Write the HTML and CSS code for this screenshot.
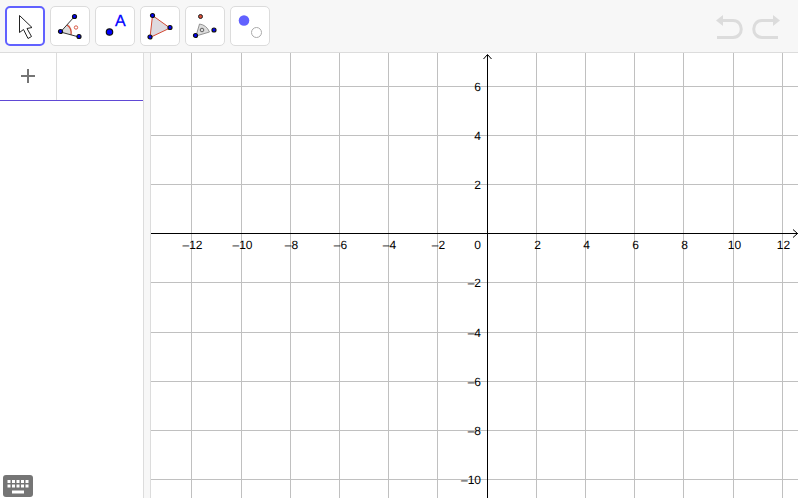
FILE: index.html
```html
<!DOCTYPE html>
<html lang="en">
<head>
    <meta charset="UTF-8">
    <title>Graphing</title>
    <meta name="viewport" content="width=device-width, initial-scale=1">
    <link rel="stylesheet" href="styles.css">
</head>
<body>
<div class="app">
    <header class="toolbar">
        <div class="tools">
            <button class="tool selected" aria-label="Move">
                <svg viewBox="0 0 36 36"><path d="M12.500 7.500v17l4-3 4.500 9 3.500-2-4.500-8 5-1z" fill="#fff" stroke="#222" stroke-width="1"/></svg>
            </button>
            <button class="tool" aria-label="Angle">
                <svg viewBox="0 0 36 36">
                    <path d="M8.500 24l8-8q4 4 3 10.500z" fill="#ddd"/>
                    <path d="M15 17q5 3 4 10" fill="none" stroke="#d54b35" stroke-width="1.2"/>
                    <path d="M22.500 8.500L8.500 24l18.500 5" fill="none" stroke="#333" stroke-width="1"/>
                    <circle cx="24" cy="19.500" r="1.700" fill="none" stroke="#d54b35" stroke-width=".9"/>
                    <g class="point"><circle cx="22.500" cy="8.500" r="2"/><circle cx="8.500" cy="23.500" r="2"/><circle cx="27" cy="28.500" r="2"/></g>
                </svg>
            </button>
            <button class="tool" aria-label="Point">
                <svg viewBox="0 0 36 36">
                    <circle class="point" cx="12.500" cy="24" r="3.200"/>
                    <text class="point-name" x="18" y="18">A</text>
                </svg>
            </button>
            <button class="tool" aria-label="Polygon">
                <svg viewBox="0 0 36 36">
                    <path d="M10.500 7.500L8 29.500l20-9.500z" fill="#dedadf" stroke="#d54b35" stroke-width="1"/>
                    <g class="point"><circle cx="10.500" cy="7.500" r="2"/><circle cx="8" cy="29" r="2"/><circle cx="28" cy="19.500" r="2"/></g>
                </svg>
            </button>
            <button class="tool" aria-label="Rotate">
                <svg viewBox="0 0 36 36">
                    <path d="M12.500 16q7 1 10 8L9 28z" fill="#ddd"/>
                    <path d="M9 28l3.500-12q7 1 10 8z" fill="none" stroke="#888" stroke-width=".9"/>
                    <circle cx="15" cy="22" r="1.800" fill="none" stroke="#555" stroke-width=".9"/>
                    <circle cx="13.500" cy="8.500" r="2" fill="#d54b35" stroke="#222" stroke-width="1"/>
                    <g class="point"><circle cx="8.500" cy="27.500" r="2"/><circle cx="27" cy="22" r="2"/></g>
                </svg>
            </button>
            <button class="tool" aria-label="Show / Hide">
                <svg viewBox="0 0 36 36">
                    <circle cx="12" cy="12.500" r="5.300" fill="#6161ff"/>
                    <circle cx="24.500" cy="24.500" r="5" fill="#fff" stroke="#aaa" stroke-width="1"/>
                </svg>
            </button>
        </div>
        <div class="history">
            <button aria-label="Undo" disabled>
                <svg viewBox="0 0 28 26"><path class="head" d="M0 7.500L7 2v11z"/><path class="shaft" d="M6 7.500h11c11 0 11 17 0 17H1"/></svg>
            </button>
            <button aria-label="Redo" disabled>
                <svg viewBox="0 0 28 26"><path class="head" d="M28 7.500L21 2v11z"/><path class="shaft" d="M22 7.500H10c-11 0-11 17 0 17h16"/></svg>
            </button>
        </div>
    </header>
    <main class="views">
        <section class="algebra">
            <div class="input-row">
                <button class="add" aria-label="Add">
                    <svg viewBox="0 0 14 14"><path d="M7 0v14M0 7h14"/></svg>
                </button>
                <input class="expression" type="text" aria-label="Input">
            </div>
            <button class="keyboard" aria-label="Keyboard">
                <svg viewBox="0 0 30 22">
                    <rect width="30" height="22" rx="3" fill="#757575"/>
                    <path d="M4.500 6.500h21.500M4.500 11h21.500" stroke="#fff" stroke-width="3" stroke-dasharray="3 1.500"/>
                    <path d="M9 17h12" stroke="#fff" stroke-width="3"/>
                </svg>
            </button>
        </section>
        <div class="splitter"></div>
        <section class="graphics">
            <svg class="plot" id="plot"></svg>
        </section>
    </main>
</div>
<script src="plot.js"></script>
</body>
</html>
```

FILE: styles.css
```css
* {
    box-sizing: border-box;
}
body {
    margin: 0;
    height: 100vh;
    padding: 0 2px 2px 0;
    background: #fff;
    font-family: "Liberation Sans", Arial, sans-serif;
}
button {
    margin: 0;
    padding: 0;
    border: none;
    background: none;
}
svg {
    display: block;
}
.app {
    height: 100%;
    display: flex;
    flex-direction: column;
}
.toolbar {
    display: flex;
    align-items: center;
    justify-content: space-between;
    height: 53px;
    padding: 0 18px 0 5px;
    background: #f7f7f7;
    border-bottom: 1px solid #dcdcdc;
}
.tools {
    display: flex;
    gap: 5px;
}
.tool {
    width: 40px;
    height: 40px;
    background: #fff;
    border: 1px solid #dcdcdc;
    border-radius: 5px;
}
.tool.selected {
    border: 2px solid #6161ff;
}
.tool svg {
    width: 36px;
    height: 36px;
    margin: 0 auto;
}
.point {
    fill: #00f;
    stroke: #111;
    stroke-width: 1.2px;
}
.point-name {
    fill: #00f;
    stroke: #00f;
    stroke-width: 0.3px;
    font-size: 16px;
    text-rendering: geometricPrecision;
}
.history {
    display: flex;
    gap: 8px;
}
.history svg {
    width: 28px;
    height: 26px;
    overflow: visible;
}
.head {
    fill: #dcdcdc;
}
.shaft {
    fill: none;
    stroke: #dcdcdc;
    stroke-width: 3px;
}
.views {
    flex: 1;
    min-height: 0;
    display: flex;
}
.algebra {
    width: 143px;
    display: flex;
    flex-direction: column;
    justify-content: space-between;
    align-items: flex-start;
}
.input-row {
    display: flex;
    width: 100%;
    height: 48px;
    border-bottom: 1px solid #6049d5;
}
.add {
    width: 57px;
    padding-bottom: 1px;
    border-right: 1px solid #dcdcdc;
}
.add svg {
    width: 14px;
    height: 14px;
    margin: 0 auto;
    stroke: #757575;
    stroke-width: 2px;
}
.expression {
    flex: 1;
    min-width: 0;
    border: none;
    outline: none;
    font-size: 16px;
}
.keyboard {
    margin: 0 0 1px 3px;
}
.keyboard svg {
    width: 30px;
    height: 22px;
}
.splitter {
    width: 8px;
    background: #f7f7f7;
    border: solid #dcdcdc;
    border-width: 0 1px;
}
.graphics {
    flex: 1;
    min-width: 0;
    overflow: hidden;
}
.plot {
    width: 100%;
    height: 100%;
    font-size: 12px;
    text-rendering: geometricPrecision;
}
.grid {
    stroke: #c0c0c0;
    shape-rendering: crispEdges;
}
.axis {
    stroke: #000;
    shape-rendering: crispEdges;
}
.arrow {
    fill: none;
    stroke: #000;
}
.middle {
    text-anchor: middle;
}
.end {
    text-anchor: end;
}
```

FILE: plot.js
```js
const plot = document.getElementById("plot");
const origin = { x: 336, y: 180 };
const step = 49.2; // pixels for two units

function label(n) {
    return n < 0 ? "–" + -n : String(n);
}

function line(cls, x1, y1, x2, y2) {
    return `<line class="${cls}" x1="${x1}" y1="${y1}" x2="${x2}" y2="${y2}"/>`;
}

function draw() {
    const w = plot.clientWidth;
    const h = plot.clientHeight;
    const ox = origin.x + 0.5;
    const oy = origin.y + 0.5;
    let lines = "";
    let labels = "";

    for (let k = Math.ceil(-origin.x / step); origin.x + k * step < w; k++) {
        const x = Math.floor(origin.x + k * step) + 0.5;
        if (k === 0) continue;
        lines += line("grid", x, 0, x, h);
        labels += `<text class="middle" x="${x + 1}" y="${origin.y + 16}">${label(2 * k)}</text>`;
    }
    for (let k = Math.ceil(-origin.y / step); origin.y + k * step < h; k++) {
        const y = Math.round(origin.y + 0.2 + k * step) + 0.5;
        if (k === 0) continue;
        lines += line("grid", 0, y, w, y);
        labels += `<text class="end" x="${origin.x - 6}" y="${y + 4.5}">${label(-2 * k)}</text>`;
    }
    labels += `<text class="end" x="${origin.x - 6}" y="${origin.y + 16}">0</text>`;

    lines += line("axis", 0, oy, w, oy) + line("axis", ox, 2, ox, h);
    lines += `<path class="arrow" d="M${ox - 4} 6L${ox} 1.5L${ox + 4} 6"/>`;
    lines += `<path class="arrow" d="M${w - 5} ${oy - 4}L${w - 0.5} ${oy}L${w - 5} ${oy + 4}"/>`;
    plot.innerHTML = lines + labels;
}

window.addEventListener("resize", draw);
draw();
```
